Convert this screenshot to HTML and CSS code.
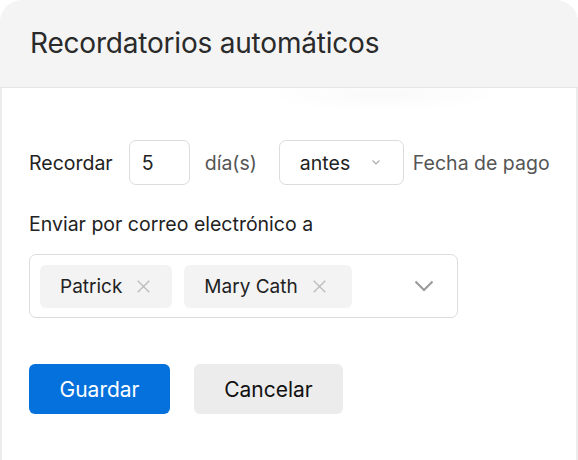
FILE: index.html
```html
<!DOCTYPE html>
<html lang="es">
<head>
<meta charset="utf-8">
<link rel="stylesheet" href="styles.css">
</head>
<body>
<div class="card">
  <div class="card-header">
    <h1 class="title">Recordatorios automáticos</h1>
  </div>
  <div class="card-body">
    <div class="remind-row">
      <span class="label">Recordar</span>
      <div class="input-box num">5</div>
      <span class="muted days">día(s)</span>
      <div class="input-box select">
        <span>antes</span>
        <svg class="chev-sm" width="8" height="5" viewBox="0 0 8 5"><path d="M0.5 0.5l3.5 3.5 3.5-3.5" fill="none" stroke="#aaa" stroke-width="1.1"/></svg>
      </div>
      <span class="muted due">Fecha de pago</span>
    </div>
    <div class="email-label">Enviar por correo electrónico a</div>
    <div class="multi">
      <div class="chip"><span>Patrick</span><svg width="13" height="13" viewBox="0 0 13 13"><path d="M0.7 0.7l11.6 11.6M12.3 0.7L0.7 12.3" stroke="#bbb" stroke-width="1.3"/></svg></div>
      <div class="chip wide"><span>Mary Cath</span><svg width="13" height="13" viewBox="0 0 13 13"><path d="M0.7 0.7l11.6 11.6M12.3 0.7L0.7 12.3" stroke="#bbb" stroke-width="1.3"/></svg></div>
      <svg class="chev" width="20" height="12" viewBox="0 0 20 12"><path d="M1.5 1.5l8.5 8.5 8.5-8.5" fill="none" stroke="#999" stroke-width="2"/></svg>
    </div>
    <div class="actions">
      <button class="btn primary">Guardar</button>
      <button class="btn secondary">Cancelar</button>
    </div>
  </div>
</div>
</body>
</html>
```
FILE: styles.css
```css
* { box-sizing: border-box; }
html, body { margin: 0; padding: 0; background: #fff; }
body {
  font-family: Inter, "Noto Sans", "Liberation Sans", sans-serif;
  color: #222;
  width: 578px;
  height: 460px;
  overflow: hidden;
}
.card {
  width: 578px;
  height: 460px;
  border-radius: 22px 22px 0 0;
  overflow: hidden;
  display: flex;
  flex-direction: column;
}
.card-header {
  height: 88px;
  background: #f4f4f4;
  border-bottom: 1px solid #e6e6e6;
  padding: 0 30px;
  display: flex;
  align-items: center;
  flex-shrink: 0;
}
.title {
  margin: 0 0 2px;
  font-size: 28px;
  font-weight: 400;
  color: #2a2a2a;
  letter-spacing: -0.2px;
}
.card-body {
  flex: 1;
  border-left: 2px solid #ececec;
  border-right: 2px solid #ececec;
  padding: 52px 0 0 27px;
  background: radial-gradient(ellipse 120px 18px at 380px 6px, rgba(0,0,0,0.025), rgba(0,0,0,0) 100%), #fff;
}
.remind-row {
  display: flex;
  align-items: center;
  height: 45px;
  font-size: 19.5px;
}
.label { margin-right: 16px; }
.input-box {
  height: 45px;
  border: 1px solid #dcdcdc;
  border-radius: 7px;
  display: flex;
  align-items: center;
  background: #fff;
  flex-shrink: 0;
}
.num { width: 61px; padding-left: 12px; }
.muted { color: #555; }
.days { margin: 0 22px 0 15px; }
.select {
  width: 125px;
  padding: 0 0 0 20px;
}
.select span { width: 72px; }
.chev-sm { display: block; }
.due { margin-left: 9px; white-space: nowrap; }
.email-label {
  margin-top: 26px;
  font-size: 19.5px;
  line-height: 26px;
  color: #222;
}
.multi {
  margin-top: 17px;
  width: 429px;
  height: 64px;
  border: 1px solid #dcdcdc;
  border-radius: 7px;
  display: flex;
  align-items: center;
  padding: 0 0 0 10px;
  gap: 12px;
}
.chip {
  height: 43px;
  background: #f3f3f3;
  border-radius: 6px;
  display: flex;
  align-items: center;
  gap: 15px;
  padding: 0 22px 0 20px;
  font-size: 19px;
  color: #222;
}
.chip.wide { padding-right: 26px; }
.chip svg { display: block; }
.chev { margin-left: auto; margin-right: 23px; display: block; }
.actions {
  margin-top: 46px;
  display: flex;
  gap: 24px;
}
.btn {
  height: 50px;
  border: none;
  border-radius: 6px;
  font-family: Inter, "Noto Sans", "Liberation Sans", sans-serif;
  font-size: 21px;
  padding: 0;
}
.primary { width: 141px; background: #0571dc; color: #fff; }
.secondary { width: 149px; background: #ececec; color: #111; }
```
